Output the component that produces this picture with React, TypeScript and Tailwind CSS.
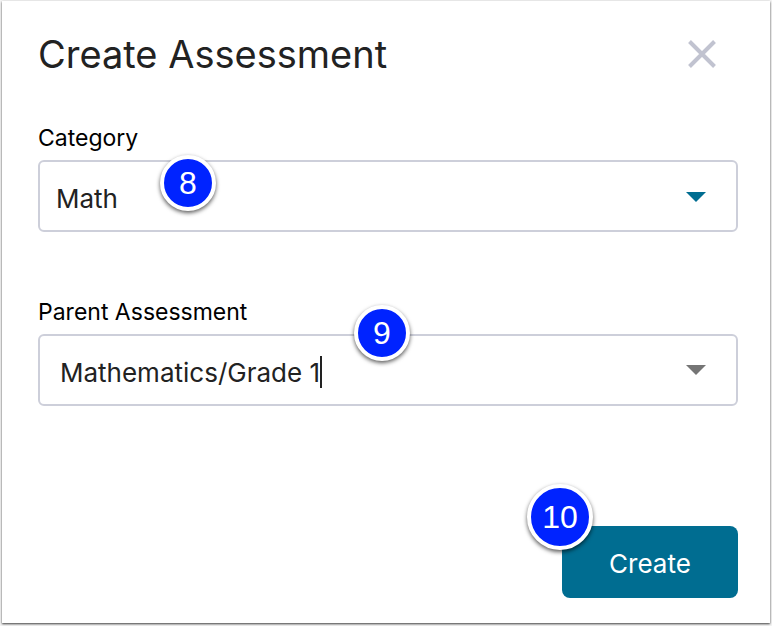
import React, { useState } from 'react';

type StepProps = {
  number: number;
  className: string;
};

const Step = ({ number, className }: StepProps) => (
  <span
    className={`absolute flex items-center justify-center rounded-full border-4 border-white bg-[#0023ff] font-['Liberation_Sans',Arial,sans-serif] text-white shadow-[0_2px_4px_rgba(0,0,0,0.65)] pointer-events-none ${className}`}
  >
    {number}
  </span>
);

const Arrow = ({ className }: { className: string }) => (
  <svg viewBox="0 0 20 10" className={`h-[10px] w-5 fill-current ${className}`} aria-hidden="true">
    <path d="M0 0h20L10 10z" />
  </svg>
);

const App = () => {
  const [category, setCategory] = useState('Math');
  const [parent, setParent] = useState('Mathematics/Grade 1');

  return (
    <div className="min-h-screen bg-[#f4f4f4] px-[2px] pt-px pb-[3px] font-['Inter',sans-serif]">
      <form
        className="bg-white pt-[29px] pr-8 pb-[25px] pl-9 shadow-[0_1px_2px_rgba(0,0,0,0.75)]"
        onSubmit={(e) => e.preventDefault()}
      >
        <header className="flex items-center justify-between">
          <h1 className="text-[38px] leading-[48px] text-[#222]">Create Assessment</h1>
          <button type="button" aria-label="Close" className="mr-[22px] text-[#c1c3d0]">
            <svg viewBox="0 0 28 28" className="size-7" fill="none" stroke="currentColor" strokeWidth="4">
              <path d="M1.5 1.5l25 25M26.5 1.5l-25 25" />
            </svg>
          </button>
        </header>

        <div className="mt-11">
          <label htmlFor="category" className="block text-[23px] leading-8 text-black">
            Category
          </label>
          <div className="relative mt-[6px]">
            <select
              id="category"
              value={category}
              onChange={(e) => setCategory(e.target.value)}
              className="block h-[72px] w-full appearance-none rounded-md border-2 border-[#cdcfda] bg-white px-4 pt-1 text-[26px] text-[#222] outline-none"
            >
              <option>Math</option>
            </select>
            <Arrow className="pointer-events-none absolute top-8 right-8 text-[#006d91]" />
            <Step number={8} className="-top-[5px] left-[122px] size-14 text-[32px]" />
          </div>
        </div>

        <div className="mt-16">
          <label htmlFor="parent" className="block text-[23px] leading-8 text-black">
            Parent Assessment
          </label>
          <div className="relative mt-[6px] flex h-[72px] items-center rounded-md border-2 border-[#cdcfda] px-5">
            <input
              id="parent"
              type="text"
              value={parent}
              onChange={(e) => setParent(e.target.value)}
              className="[field-sizing:content] bg-transparent pt-1 text-[26px] text-[#222] outline-none"
            />
            <span className="mt-1 h-8 w-[2px] bg-[#222]" />
            <button type="button" aria-label="Show options" className="mr-[10px] ml-auto text-[#757575]">
              <Arrow className="block" />
            </button>
            <Step number={9} className="-top-[31px] left-[314px] size-14 text-[32px]" />
          </div>
        </div>

        <footer className="mt-[120px] flex justify-end">
          <div className="relative">
            <button
              type="submit"
              className="block h-[72px] w-44 rounded-lg bg-[#006d91] pt-[2px] text-[26px] text-white"
            >
              Create
            </button>
            <Step number={10} className="-top-[42px] -left-[35px] size-[66px] text-[32px]" />
          </div>
        </footer>
      </form>
    </div>
  );
};

export default App;
